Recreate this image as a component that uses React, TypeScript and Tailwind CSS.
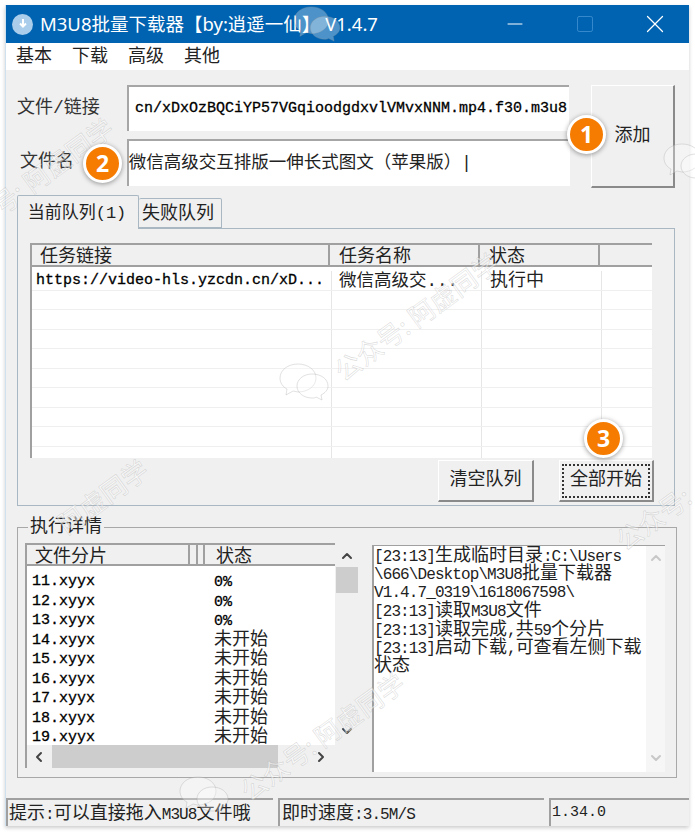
import React from "react";
import { ChevronDown, ChevronLeft, ChevronRight, ChevronUp, Minus, Square, X } from "lucide-react";

const cjk = "font-['Liberation_Mono','Noto_Sans_CJK_SC',monospace]";

const segments = [
  ["11.xyyx", "0%"],
  ["12.xyyx", "0%"],
  ["13.xyyx", "0%"],
  ["14.xyyx", "未开始"],
  ["15.xyyx", "未开始"],
  ["16.xyyx", "未开始"],
  ["17.xyyx", "未开始"],
  ["18.xyyx", "未开始"],
  ["19.xyyx", "未开始"],
];

const logLines = [
  "[23:13]生成临时目录:C:\\Users",
  "\\666\\Desktop\\M3U8批量下载器",
  "V1.4.7_0319\\1618067598\\",
  "[23:13]读取M3U8文件",
  "[23:13]读取完成,共59个分片",
  "[23:13]启动下载,可查看左侧下载",
  "状态",
];

// chinese runs are set larger than the latin ones, like the bitmap font in the app
const Mixed = ({ text }: { text: string }) => (
  <span className="text-[16px] tracking-[-0.9px] text-[#222]">
    {text.split(/([\u4e00-\u9fff]+)/).map((part, i) =>
      i % 2 === 1 ? (
        <span key={i} className="text-[18px] tracking-normal">
          {part}
        </span>
      ) : (
        part
      )
    )}
  </span>
);

const Bubbles = ({ className }: { className: string }) => (
  <svg viewBox="0 0 52 40" className={`pointer-events-none absolute ${className}`} fill="#ffffff" fillOpacity="0.3" stroke="#9a9a9a" strokeOpacity="0.3">
    <path d="M20 2c-10 0-18 6-18 14 0 5 3 9 7 11l-1 6 7-4c2 0 3 1 5 1 10 0 18-6 18-14S30 2 20 2z" />
    <path d="M34 12c-8 0-15 5-15 12s7 12 15 12c2 0 3 0 4-1l6 3-1-5c4-2 7-5 7-9 0-7-7-12-16-12z" />
  </svg>
);

const Mark = ({ className, text }: { className: string; text: string }) => (
  <span className={`pointer-events-none absolute -rotate-[36deg] whitespace-nowrap font-['Noto_Sans_CJK_SC',sans-serif] text-[26px] text-white/50 [-webkit-text-stroke:0.6px_rgba(140,140,140,0.3)] ${className}`}>
    {text}
  </span>
);

const Badge = ({ n, className }: { n: number; className: string }) => (
  <div className={`absolute flex h-[39px] w-[39px] items-center justify-center rounded-full border-[3px] border-white bg-[#f57c00] font-['Open_Sans',sans-serif] text-[23px] font-bold text-white shadow-[0_1px_5px_rgba(0,0,0,0.4)] ${className}`}>
    {n}
  </div>
);

const Raised = ({ children, className = "" }: { children: React.ReactNode; className?: string }) => (
  <div className={`flex items-center justify-center border-t border-l border-t-white border-l-white border-r-2 border-b-2 border-r-[#8a8a8a] border-b-[#8a8a8a] bg-[#f0f0f0] text-[18px] text-[#222] ${className}`}>
    {children}
  </div>
);

export default function App() {
  return (
    <div className={`relative h-[832px] w-[695px] overflow-hidden bg-white pl-[5px] pt-[5px] ${cjk}`}>
      <div className="flex h-[821px] w-[684px] flex-col border-l border-[#cfe0ee] bg-[#f0f0f0] shadow-[0_2px_4px_rgba(0,0,0,0.2)]">
        {/* title bar */}
        <div className="flex h-[38px] shrink-0 items-center bg-[#0063b1] pl-[6px] text-white">
          <div className="flex h-[21px] w-[21px] items-center justify-center rounded-full bg-[#a9cdea]">
            <svg viewBox="0 0 12 12" className="h-[12px] w-[12px]" fill="none" stroke="#ffffff" strokeWidth="2">
              <path d="M6 1v7M3 5.500 6 8.500 9 5.500" />
            </svg>
          </div>
          <span className="ml-[7px] w-[463px] whitespace-nowrap font-['Noto_Sans','Noto_Sans_CJK_SC',sans-serif] text-[18.5px]">
            M3U8批量下载器【by:逍遥一仙】 V1.4.7
          </span>
          <Minus className="h-[24px] w-[24px]" strokeWidth={1} />
          <Square className="ml-[48px] h-[20px] w-[20px] text-[#3f8fd0]" strokeWidth={1} />
          <X className="ml-[45px] h-[30px] w-[30px]" strokeWidth={1} />
        </div>

        {/* menu */}
        <div className="flex h-[27px] shrink-0 items-center gap-[20px] bg-white pl-[10px] pt-[2px] text-[18px] text-[#222]">
          <span>基本</span>
          <span>下载</span>
          <span>高级</span>
          <span>其他</span>
        </div>

        <div className="flex pl-[11px] pt-[15px]">
          <div className="flex w-[553px] flex-col gap-[8px]">
            <div className="flex h-[46px]">
              <div className="flex w-[110px] items-center text-[18px] text-[#333]">文件/链接</div>
              <div className="flex w-[442px] items-center overflow-hidden whitespace-nowrap border-t-2 border-l-2 border-[#a6a6a6] bg-white pl-[6px] text-[15px] text-black [-webkit-text-stroke:0.3px_#000]">
                cn/xDxOzBQCiYP57VGqioodgdxvlVMvxNNM.mp4.f30.m3u8
              </div>
            </div>
            <div className="flex h-[47px]">
              <div className="flex w-[110px] items-center pl-[3px] text-[18px] text-[#333]">文件名</div>
              <div className="flex w-[444px] items-center whitespace-nowrap border-t-2 border-l-2 border-[#a6a6a6] bg-white text-[17.5px] text-[#222]">
                微信高级交互排版一伸长式图文（苹果版）|
              </div>
            </div>
          </div>
          <Raised className="ml-[21px] h-[103px] w-[84px]">添加</Raised>
        </div>

        {/* tabs */}
        <div className="mt-[7px] flex h-[33px] items-end pl-[11px] text-[18px] text-[#222]">
          <div className="relative z-10 -mb-px flex h-[34px] w-[122px] items-center justify-center rounded-t-[2px] border border-b-0 border-[#a9b7c3] bg-[#f0f0f0] pt-[3px] pr-[2px] text-[17px]">
            当前队列(1)
          </div>
          <div className="flex h-[30px] w-[83px] items-center justify-center rounded-t-[2px] border border-l-0 border-[#a9b7c3] bg-[#f0f0f0] pt-[3px] pr-[4px]">
            失败队列
          </div>
        </div>
        <div className="ml-[11px] flex h-[278px] w-[658px] flex-col border border-[#a9b7c3] pl-[12px] pt-[14px]">
          <div className="flex h-[215px] w-[622px] flex-col overflow-hidden border-l-2 border-[#a0a0a0] bg-white text-[18px] text-[#222]">
            <div className="flex h-[24px] shrink-0 overflow-hidden border-t-2 border-b-2 border-[#a0a0a0] bg-[#f0f0f0] leading-[24px]">
              <div className="w-[298px] border-r-2 border-[#a0a0a0] pl-[8px]">任务链接</div>
              <div className="w-[150px] border-r-2 border-[#a0a0a0] pl-[9px]">任务名称</div>
              <div className="w-[120px] border-r-2 border-[#a0a0a0] pl-[9px]">状态</div>
              <div className="flex-1" />
            </div>
            <div className="mt-[4px] flex h-[19.5px] border-b border-[#efefef] leading-[20px]">
              <div className="w-[300px] whitespace-nowrap border-r border-[#e6e6e6] pl-[4px] text-[15px] text-black [-webkit-text-stroke:0.3px_#000]">
                https://video-hls.yzcdn.cn/xD...
              </div>
              <div className="w-[150px] whitespace-nowrap border-r border-[#e6e6e6] pl-[7px] text-[17.5px]">微信高级交...</div>
              <div className="w-[120px] border-r border-[#e6e6e6] pl-[8px]">执行中</div>
            </div>
            {[1, 2, 3, 4, 5, 6, 7, 8, 9].map((i) => (
              <div key={i} className="flex h-[19.5px] shrink-0 border-b border-[#efefef]">
                <div className="w-[300px] border-r border-[#e6e6e6]" />
                <div className="w-[150px] border-r border-[#e6e6e6]" />
                <div className="w-[120px] border-r border-[#e6e6e6]" />
              </div>
            ))}
          </div>
          <div className="mt-[2px] flex justify-end gap-[25px] pr-[20px]">
            <Raised className="h-[42px] w-[96px]">清空队列</Raised>
            <Raised className="h-[42px] w-[95px]">
              <span className="flex h-[34px] w-[88px] items-center justify-center border-2 border-dotted border-[#333]">全部开始</span>
            </Raised>
          </div>
        </div>

        {/* details */}
        <fieldset className="ml-[11px] mt-[12px] h-[260px] w-[660px] border border-[#a8a8a8] pl-[7px]">
          <legend className="ml-[3px] px-[2px] text-[18px] leading-[18px] text-[#222]">执行详情</legend>
          <div className="mt-[7px] flex">
            <div className="flex h-[225px] w-[333px] flex-col border-l-2 border-[#a0a0a0]">
              <div className="flex min-h-0 flex-1">
                <div className="flex w-[308px] flex-col bg-white text-[18px] text-[#222]">
                  <div className="flex h-[23px] shrink-0 overflow-hidden border-t-2 border-b-2 border-[#a0a0a0] bg-[#f0f0f0] leading-[24px]">
                    <div className="w-[163px] border-r-2 border-[#a0a0a0] pl-[8px]">文件分片</div>
                    <div className="ml-[6px] w-[9px] border-x-2 border-[#a0a0a0]" />
                    <div className="pl-[11px]">状态</div>
                  </div>
                  <div className="min-h-0 flex-1 overflow-hidden pt-[6px]">
                    {segments.map(([name, state]) => (
                      <div key={name} className="flex h-[19.5px] leading-[19.5px]">
                        <div className="w-[187px] pl-[5px] text-[15px] text-black [-webkit-text-stroke:0.3px_#000]">{name}</div>
                        <div>{state === "0%" ? <span className="text-[15px] text-black [-webkit-text-stroke:0.3px_#000]">{state}</span> : state}</div>
                      </div>
                    ))}
                  </div>
                </div>
                <div className="flex w-[23px] flex-col items-center text-[#444]">
                  <ChevronUp className="mt-[5px] h-[16px] w-[16px]" strokeWidth={3} />
                  <div className="mt-[3px] h-[26px] w-[22px] bg-[#cdcdcd]" />
                  <ChevronDown className="mt-auto mb-[6px] h-[16px] w-[16px]" strokeWidth={3} />
                </div>
              </div>
              <div className="flex h-[23px] shrink-0 items-center text-[#444]">
                <ChevronLeft className="ml-[4px] h-[16px] w-[16px]" strokeWidth={3} />
                <div className="ml-[5px] h-[23px] w-[226px] bg-[#cdcdcd]" />
                <ChevronRight className="ml-[35px] h-[16px] w-[16px]" strokeWidth={3} />
              </div>
            </div>
            <div className="ml-[14px] mt-[2px] flex h-[227px] w-[293px] border-t border-l-2 border-[#a0a0a0] bg-white">
              <div className="flex-1 pt-[1px]">
                {logLines.map((line) => (
                  <div key={line} className="h-[18.400px] whitespace-nowrap leading-[18.400px]">
                    <Mixed text={line} />
                  </div>
                ))}
              </div>
              <div className="flex w-[19px] flex-col items-center bg-[#f6f6f6] text-[#c8c8c8]">
                <ChevronUp className="mt-[4px] h-[16px] w-[16px]" strokeWidth={3} />
                <ChevronDown className="mt-auto mb-[6px] h-[16px] w-[16px]" strokeWidth={3} />
              </div>
            </div>
          </div>
        </fieldset>

        {/* status bar */}
        <div className="mt-[20px] flex h-[28px] gap-[5px]">
          <div className="w-[267px] whitespace-nowrap border-t-2 border-l-2 border-[#a0a0a0] pl-[1px] leading-[28px]"><Mixed text="提示:可以直接拖入M3U8文件哦" /></div>
          <div className="w-[266px] whitespace-nowrap border-t-2 border-l-2 border-[#a0a0a0] pl-[2px] leading-[28px]"><Mixed text="即时速度:3.5M/S" /></div>
          <div className="w-[140px] whitespace-nowrap border-t-2 border-l-2 border-[#a0a0a0] pl-[1px] text-[15px] leading-[26px] text-[#222]">1.34.0</div>
        </div>
      </div>

      {/* watermark */}
      <Bubbles className="left-[278px] top-[362px] h-[40px] w-[52px]" />
      <Bubbles className="left-[662px] top-[142px] h-[40px] w-[52px]" />
      <Bubbles className="left-[178px] top-[775px] h-[40px] w-[52px]" />
      <Bubbles className="left-[292px] top-[5px] h-[38px] w-[50px]" />
      <Mark className="left-[318px] top-[296px]" text="公众号: 阿虚同学" />
      <Mark className="left-[224px] top-[716px]" text="公众号: 阿虚同学" />
      <Mark className="left-[-20px] top-[146px]" text="号: 阿虚同学" />
      <Mark className="left-[50px] top-[476px]" text="阿虚同学" />
      <Mark className="left-[610px] top-[498px]" text="公众号:" />

      <Badge n={1} className="left-[567px] top-[115px]" />
      <Badge n={2} className="left-[83px] top-[144px]" />
      <Badge n={3} className="left-[584px] top-[419px]" />
    </div>
  );
}
